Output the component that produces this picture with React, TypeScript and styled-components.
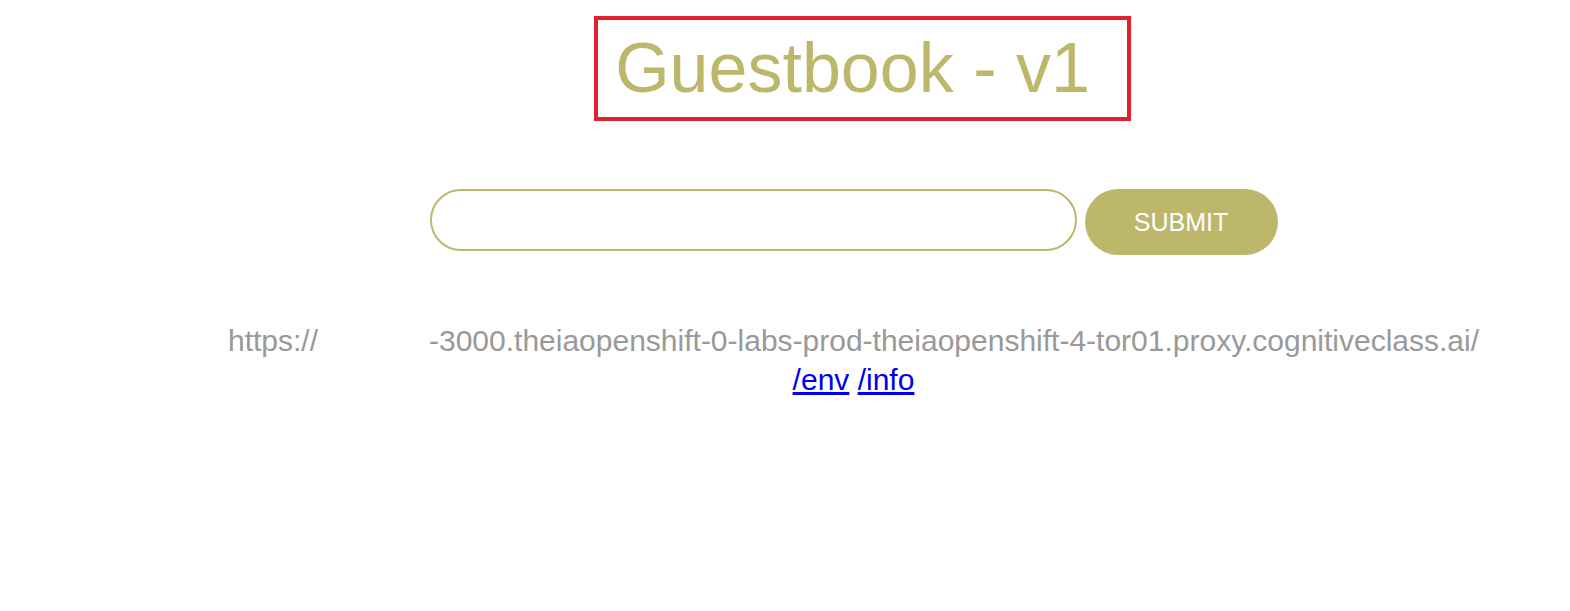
import React from "react";
import styled, { createGlobalStyle } from "styled-components";

const Global = createGlobalStyle`
  html, body { margin: 0; padding: 0; background: #ffffff; }
  body { font-family: "Liberation Sans", Arial, sans-serif; }
`;

const khaki = "#BDB76B";

const Page = styled.div`
  width: 1570px;
  box-sizing: border-box;
  padding-left: 137px;
  display: flex;
  flex-direction: column;
  align-items: center;
`;

const Header = styled.div`
  margin-top: 16px;
  margin-left: 18px;
  border: 4px solid #e3202e;
  padding: 8px 37px 9px 17px;
`;

const Title = styled.h1`
  margin: 0;
  font-size: 70px;
  font-weight: 400;
  line-height: normal;
  color: ${khaki};
  white-space: nowrap;
`;

const Form = styled.form`
  margin-top: 68px;
  display: flex;
  align-items: flex-start;
  gap: 8px;
`;

const Entry = styled.input`
  box-sizing: border-box;
  width: 647px;
  height: 62px;
  border: 2px solid ${khaki};
  border-radius: 31px;
  outline: none;
  padding: 0 24px;
  font-family: inherit;
  font-size: 25px;
  background: #fff;
`;

const Submit = styled.a`
  box-sizing: border-box;
  width: 193px;
  height: 66px;
  border-radius: 33px;
  background: ${khaki};
  color: #ffffff;
  font-size: 25px;
  text-decoration: none;
  display: flex;
  align-items: center;
  justify-content: center;
  text-transform: uppercase;
`;

const Host = styled.div`
  margin-top: 66px;
  font-size: 30px;
  line-height: 34.5px;
  color: #999999;
  white-space: nowrap;
  text-align: center;
`;

const Redacted = styled.span`
  display: inline-block;
  width: 111px;
  height: 1em;
  background: #ffffff;
  vertical-align: baseline;
`;

const Links = styled.div`
  margin-top: 4px;
  font-size: 30px;
  line-height: 34.5px;
  text-align: center;
`;

const Link = styled.a`
  color: #0000ee;
  text-decoration: underline;
`;

export default function App() {
  return (
    <>
      <Global />
      <Page>
        <Header>
          <Title>Guestbook - v1</Title>
        </Header>
        <Form onSubmit={(e) => e.preventDefault()}>
          <Entry type="text" autoComplete="off" />
          <Submit href="#">Submit</Submit>
        </Form>
        <Host>
          https://<Redacted />-3000.theiaopenshift-0-labs-prod-theiaopenshift-4-tor01.proxy.cognitiveclass.ai/
        </Host>
        <Links>
          <Link href="#env">/env</Link> <Link href="#info">/info</Link>
        </Links>
      </Page>
    </>
  );
}
